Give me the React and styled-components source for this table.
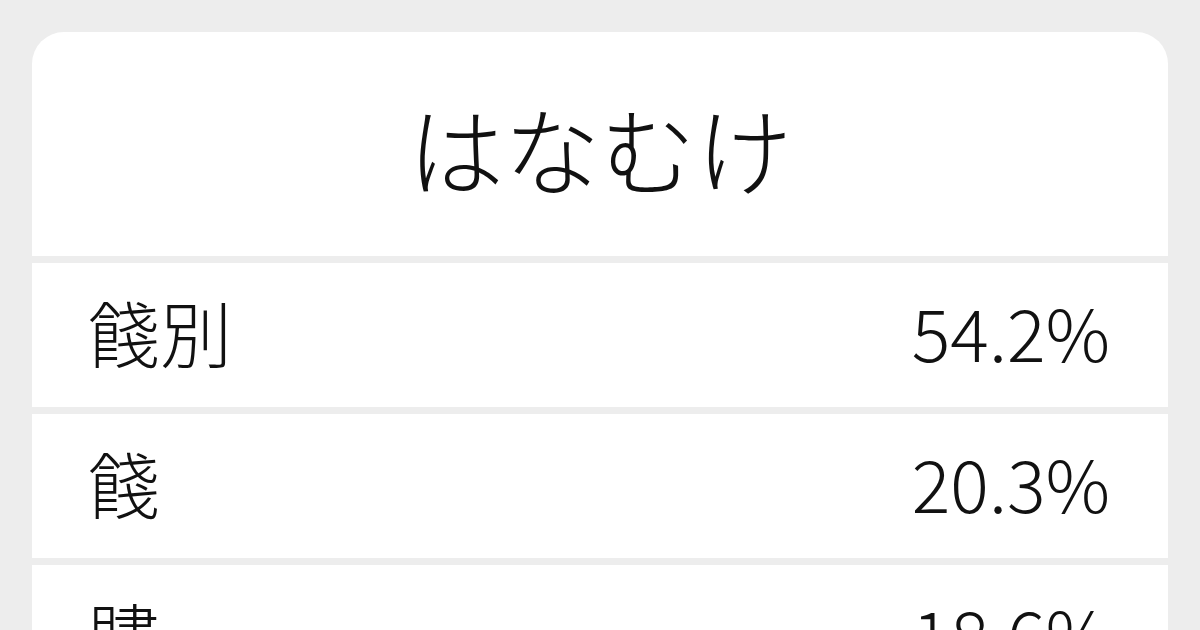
import styled, { createGlobalStyle } from "styled-components";

const GlobalStyle = createGlobalStyle`
  html, body {
    margin: 0;
    padding: 0;
    background: #ededed;
    font-family: "Noto Sans CJK JP", "Noto Sans", sans-serif;
    color: #111111;
  }
`;

const results = [
  { word: "餞別", rate: "54.2%" },
  { word: "餞", rate: "20.3%" },
  { word: "贐", rate: "18.6%" },
];

const App = () => {
  return (
    <>
      <GlobalStyle />
      <Page>
        <Card>
          <Header>
            <Title>はなむけ</Title>
          </Header>
          {results.map((item) => (
            <Row key={item.word}>
              <Word>{item.word}</Word>
              <Rate>{item.rate}</Rate>
            </Row>
          ))}
        </Card>
      </Page>
    </>
  );
};

const Page = styled.main`
  height: 630px;
  overflow: hidden;
  padding: 32px 32px 0;
  box-sizing: border-box;
`;

const Card = styled.section`
  display: flex;
  flex-direction: column;
  gap: 7px;
  border-radius: 32px 32px 0 0;
  overflow: hidden;
`;

const Header = styled.header`
  height: 224px;
  display: flex;
  align-items: center;
  justify-content: center;
  background: #ffffff;
  padding-top: 6px;
  box-sizing: border-box;
`;

const Title = styled.h1`
  margin: 0;
  font-size: 96px;
  font-weight: 300;
  line-height: 1;
  letter-spacing: 0;
`;

const Row = styled.div`
  height: 144px;
  flex-shrink: 0;
  display: flex;
  align-items: center;
  justify-content: space-between;
  padding: 0 58px 8px 56px;
  box-sizing: border-box;
  background: #ffffff;
`;

const Word = styled.span`
  font-size: 72px;
  font-weight: 300;
  line-height: 1;
`;

const Rate = styled.span`
  font-size: 72px;
  font-weight: 300;
  line-height: 1;
`;

export default App;
